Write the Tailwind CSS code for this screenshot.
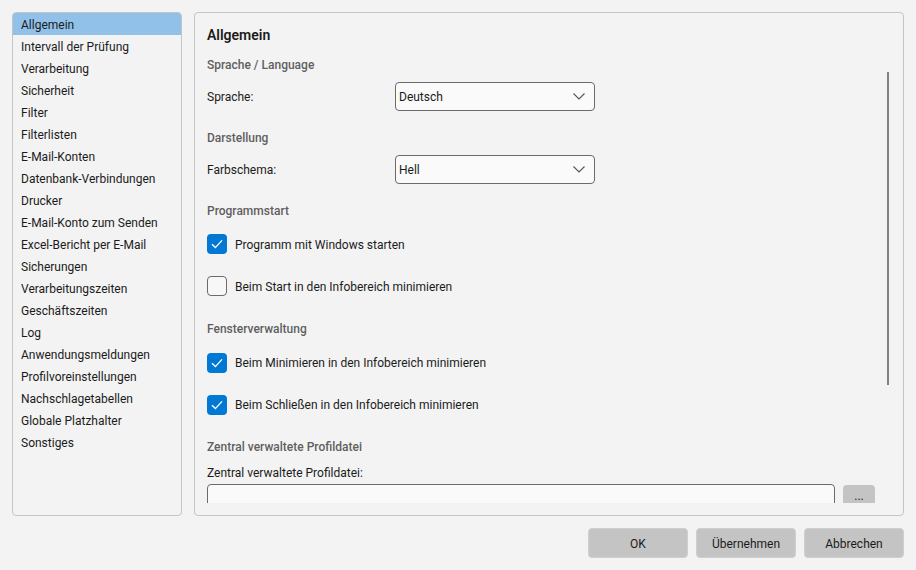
<!DOCTYPE html>
<html lang="de"><head><meta charset="utf-8"><script src="https://cdn.jsdelivr.net/npm/@tailwindcss/browser@4"></script></head>
<body class="m-0">
<div class="w-[916px] h-[570px] bg-[#f3f3f3] text-[#1b1b1b] text-[12px] leading-[16px] font-['Roboto','Open_Sans',sans-serif] flex flex-col overflow-hidden">
  <div class="flex gap-3 h-[504px] mt-3 mx-3">
    <ul class="w-[170px] h-full border border-[#c4c4c4] rounded bg-[#f3f3f3] overflow-hidden">
      <li class="h-[22px] pl-2 pt-[4px] bg-[#91c1e9]">Allgemein</li>
      <li class="h-[22px] pl-2 pt-[4px]">Intervall der Prüfung</li>
      <li class="h-[22px] pl-2 pt-[4px]">Verarbeitung</li>
      <li class="h-[22px] pl-2 pt-[4px]">Sicherheit</li>
      <li class="h-[22px] pl-2 pt-[4px]">Filter</li>
      <li class="h-[22px] pl-2 pt-[4px]">Filterlisten</li>
      <li class="h-[22px] pl-2 pt-[4px]">E-Mail-Konten</li>
      <li class="h-[22px] pl-2 pt-[4px]">Datenbank-Verbindungen</li>
      <li class="h-[22px] pl-2 pt-[4px]">Drucker</li>
      <li class="h-[22px] pl-2 pt-[4px]">E-Mail-Konto zum Senden</li>
      <li class="h-[22px] pl-2 pt-[4px]">Excel-Bericht per E-Mail</li>
      <li class="h-[22px] pl-2 pt-[4px]">Sicherungen</li>
      <li class="h-[22px] pl-2 pt-[4px]">Verarbeitungszeiten</li>
      <li class="h-[22px] pl-2 pt-[4px]">Geschäftszeiten</li>
      <li class="h-[22px] pl-2 pt-[4px]">Log</li>
      <li class="h-[22px] pl-2 pt-[4px]">Anwendungsmeldungen</li>
      <li class="h-[22px] pl-2 pt-[4px]">Profilvoreinstellungen</li>
      <li class="h-[22px] pl-2 pt-[4px]">Nachschlagetabellen</li>
      <li class="h-[22px] pl-2 pt-[4px]">Globale Platzhalter</li>
      <li class="h-[22px] pl-2 pt-[4px]">Sonstiges</li>
    </ul>
    <section class="relative w-[710px] h-full border border-[#c4c4c4] rounded px-3 pt-[13px]">
      <h1 class="text-[14px] leading-[18px] font-semibold">Allgemein</h1>
      <h2 class="mt-[13px] text-[#5f5f5f] font-medium leading-[16px]">Sprache / Language</h2>
      <div class="mt-[8px] flex items-center h-[30px]"><span class="w-[188px] pt-[2px]">Sprache:</span>
        <div class="w-[200px] h-[29px] border border-[#6b6b6b] rounded bg-[#fafafa] pl-[3px] pr-[9px] flex items-center justify-between"><span class="pt-[1px]">Deutsch</span>
          <svg width="12" height="7" viewBox="0 0 12 7" fill="none" stroke="#555" stroke-width="1.1"><path d="M.5.5l5.5 5.5L11.500 .5"/></svg></div></div>
      <h2 class="mt-[19px] text-[#5f5f5f] font-medium">Darstellung</h2>
      <div class="mt-[8px] flex items-center h-[30px]"><span class="w-[188px] pt-[2px]">Farbschema:</span>
        <div class="w-[200px] h-[29px] border border-[#6b6b6b] rounded bg-[#fafafa] pl-[3px] pr-[9px] flex items-center justify-between"><span class="pt-[1px]">Hell</span>
          <svg width="12" height="7" viewBox="0 0 12 7" fill="none" stroke="#555" stroke-width="1.1"><path d="M.5.5l5.5 5.5L11.500 .5"/></svg></div></div>
      <h2 class="mt-[19px] text-[#5f5f5f] font-medium">Programmstart</h2>
      <div class="mt-[15px] flex items-center gap-2 h-5">
        <span class="w-5 h-5 rounded bg-[#0078d4] flex items-center justify-center"><svg width="12" height="10" viewBox="0 0 12 10" fill="none" stroke="#fff" stroke-width="1.4"><path d="M1 5.2l3.4 3.4L11 1.4"/></svg></span><span class="pt-[2px]">Programm mit Windows starten</span></div>
      <div class="mt-[22px] flex items-center gap-2 h-5">
        <span class="w-5 h-5 rounded border border-[#6b6b6b] bg-[#f7f7f7]"></span><span class="pt-[2px]">Beim Start in den Infobereich minimieren</span></div>
      <h2 class="mt-[25px] text-[#5f5f5f] font-medium">Fensterverwaltung</h2>
      <div class="mt-[16px] flex items-center gap-2 h-5">
        <span class="w-5 h-5 rounded bg-[#0078d4] flex items-center justify-center"><svg width="12" height="10" viewBox="0 0 12 10" fill="none" stroke="#fff" stroke-width="1.4"><path d="M1 5.2l3.4 3.4L11 1.4"/></svg></span><span>Beim Minimieren in den Infobereich minimieren</span></div>
      <div class="mt-[22px] flex items-center gap-2 h-5">
        <span class="w-5 h-5 rounded bg-[#0078d4] flex items-center justify-center"><svg width="12" height="10" viewBox="0 0 12 10" fill="none" stroke="#fff" stroke-width="1.4"><path d="M1 5.2l3.4 3.4L11 1.4"/></svg></span><span>Beim Schließen in den Infobereich minimieren</span></div>
      <h2 class="mt-[24px] text-[#5f5f5f] font-medium">Zentral verwaltete Profildatei</h2>
      <div class="mt-[10px]">Zentral verwaltete Profildatei:</div>
      <div class="mt-[3px] h-[19px] flex gap-[8px] overflow-hidden">
        <div class="w-[628px] h-[29px] border border-[#6b6b6b] rounded bg-[#fafafa] shrink-0"></div>
        <div class="w-[32px] h-[18px] mt-[1px] bg-[#c4c4c4] rounded-t text-center leading-[16px] pt-[3px] shrink-0">...</div>
      </div>
      <div class="absolute left-[692px] top-[59px] w-[2px] h-[313px] bg-[#808080]"></div>
    </section>
  </div>
  <footer class="flex justify-end gap-2 mt-3 mx-3">
    <button class="w-[100px] h-[30px] bg-[#c4c4c4] border border-[#cfcfcf] rounded pt-[1px]">OK</button>
    <button class="w-[100px] h-[30px] bg-[#c4c4c4] border border-[#cfcfcf] rounded pt-[1px]">Übernehmen</button>
    <button class="w-[100px] h-[30px] bg-[#c4c4c4] border border-[#cfcfcf] rounded pt-[1px]">Abbrechen</button>
  </footer>
</div>
</body></html>
